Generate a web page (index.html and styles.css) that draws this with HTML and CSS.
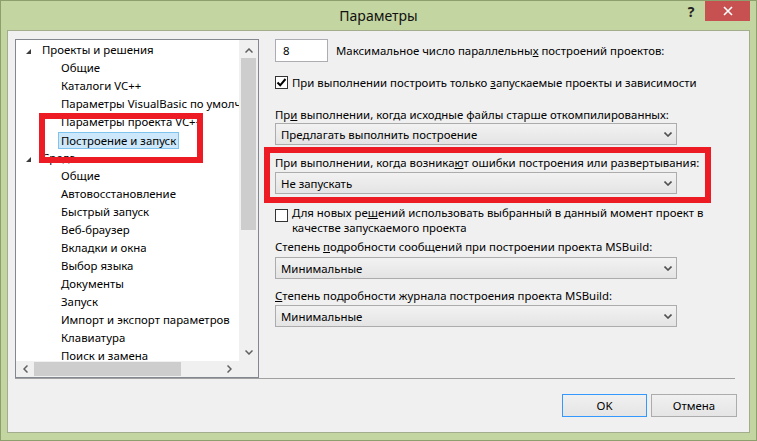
FILE: index.html
```html
<!DOCTYPE html>
<html lang="ru">
<head>
  <meta charset="UTF-8">
  <title>Параметры</title>
  <link rel="stylesheet" href="styles.css">
</head>
<body>
  <div class="window">
    <div class="titlebar">
      <div></div>
      <div class="title">Параметры</div>
      <div class="caption-buttons">
        <span class="help">?</span>
        <span class="close">
          <svg width="10" height="10" viewBox="0 0 10 10"><path d="M1 1 L9 9 M9 1 L1 9" stroke="#fff" stroke-width="1.6"/></svg>
        </span>
      </div>
    </div>

    <div class="client">
      <div class="main">
        <div class="tree">
          <div class="tree-view">
            <div class="node parent"><svg class="expander" width="5" height="5" viewBox="0 0 5 5"><polygon points="5,0 5,5 0,5" fill="#3c3c3c"/></svg>Проекты и решения</div>
            <div class="node">Общие</div>
            <div class="node">Каталоги VC++</div>
            <div class="node">Параметры VisualBasic по умолчанию</div>
            <div class="node">Параметры проекта VC++</div>
            <div class="node selected"><span>Построение и запуск</span></div>
            <div class="node parent"><svg class="expander" width="5" height="5" viewBox="0 0 5 5"><polygon points="5,0 5,5 0,5" fill="#3c3c3c"/></svg>Среда</div>
            <div class="node">Общие</div>
            <div class="node">Автовосстановление</div>
            <div class="node">Быстрый запуск</div>
            <div class="node">Веб-браузер</div>
            <div class="node">Вкладки и окна</div>
            <div class="node">Выбор языка</div>
            <div class="node">Документы</div>
            <div class="node">Запуск</div>
            <div class="node">Импорт и экспорт параметров</div>
            <div class="node">Клавиатура</div>
            <div class="node">Поиск и замена</div>
          </div>
          <div class="vscroll">
            <div class="arrow"><svg width="8" height="5" viewBox="0 0 8 5"><polyline points="0.5,4.5 4,1 7.5,4.5" fill="none" stroke="#606060" stroke-width="1.5"/></svg></div>
            <div class="thumb-v"></div>
            <div class="track"></div>
            <div class="arrow"><svg width="8" height="5" viewBox="0 0 8 5"><polyline points="0.5,0.5 4,4 7.5,0.5" fill="none" stroke="#606060" stroke-width="1.5"/></svg></div>
          </div>
          <div class="hscroll">
            <div class="arrow arrow-left"><svg width="5" height="8" viewBox="0 0 5 8"><polyline points="4.5,0.5 1,4 4.5,7.5" fill="none" stroke="#606060" stroke-width="1.5"/></svg></div>
            <div class="thumb-h"></div>
            <div class="track"></div>
            <div class="arrow arrow-right"><svg width="5" height="8" viewBox="0 0 5 8"><polyline points="0.5,0.5 4,4 0.5,7.5" fill="none" stroke="#606060" stroke-width="1.5"/></svg></div>
          </div>
          <div class="corner"></div>
        </div>

        <div class="options">
          <div class="num-row">
            <div class="num">8</div>
            <div class="num-label">Максимальное число параллельны<u>х</u> построений проектов:</div>
          </div>

          <div class="check check-first">
            <span class="box"><svg width="11" height="11" viewBox="0 0 11 11"><path d="M1.5 5.5 L4.2 8.3 L9.5 2" fill="none" stroke="#000" stroke-width="2"/></svg></span>
            <span>При выполнении построить только <u>з</u>апускаемые проекты и зависимости</span>
          </div>

          <div class="label label-1">Пр<u>и</u> выполнении, когда исходные файлы старше откомпилированных:</div>
          <div class="combo"><span>Предлагать выполнить построение</span><svg width="8" height="5" viewBox="0 0 8 5"><polyline points="0.5,0.5 4,4 7.5,0.5" fill="none" stroke="#505050" stroke-width="1.6"/></svg></div>

          <div class="label label-2">При выполнении, когда возника<u>ю</u>т ошибки построения или развертывания:</div>
          <div class="combo combo-2"><span>Не запускать</span><svg width="8" height="5" viewBox="0 0 8 5"><polyline points="0.5,0.5 4,4 7.5,0.5" fill="none" stroke="#505050" stroke-width="1.6"/></svg></div>

          <div class="check check-second">
            <span class="box"></span>
            <span>Для новых ре<u>ш</u>ений использовать выбранный в данный момент проект в<br>качестве запускаемого проекта</span>
          </div>

          <div class="label label-3">Степень <u>п</u>одробности сообщений при построении проекта MSBuild:</div>
          <div class="combo combo-3"><span>Минимальные</span><svg width="8" height="5" viewBox="0 0 8 5"><polyline points="0.5,0.5 4,4 7.5,0.5" fill="none" stroke="#505050" stroke-width="1.6"/></svg></div>

          <div class="label label-4"><u>С</u>тепень подробности журнала построения проекта MSBuild:</div>
          <div class="combo combo-4"><span>Минимальные</span><svg width="8" height="5" viewBox="0 0 8 5"><polyline points="0.5,0.5 4,4 7.5,0.5" fill="none" stroke="#505050" stroke-width="1.6"/></svg></div>
        </div>
      </div>

      <div class="separator"></div>

      <div class="buttons">
        <button class="btn default">OK</button>
        <button class="btn cancel">Отмена</button>
      </div>
    </div>

    <!-- annotation frames drawn over the dialog -->
    <div class="mark mark-tree"></div>
    <div class="mark mark-options"></div>
  </div>
</body>
</html>
```

FILE: styles.css
```css
body {
  margin: 0;
  font-family: "Segoe UI", "Noto Sans", sans-serif;
  font-size: 11.4px;
  color: #000;
}
.window {
  width: 757px;
  height: 441px;
  box-sizing: border-box;
  border: 1px solid #8d9f6c;
  background: #c3d5a0;
  position: relative;
}
.titlebar {
  height: 29px;
  display: grid;
  grid-template-columns: 1fr auto 1fr;
}
.title {
  font-size: 14px;
  line-height: 29px;
  color: #111;
}
.caption-buttons {
  display: flex;
  justify-content: flex-end;
  align-items: flex-start;
  margin-right: 6px;
}
.help {
  width: 20px;
  margin-right: 4px;
  text-align: center;
  font-weight: bold;
  font-size: 14px;
  line-height: 22px;
  color: #222;
}
.close {
  width: 45px;
  height: 20px;
  background: #c75050;
  display: flex;
  align-items: center;
  justify-content: center;
}
.client {
  margin: 0 6px;
  height: 403px;
  box-sizing: border-box;
  border: 1px solid #a3ad8d;
  background: #f0f0f0;
  padding: 8px 12px 15px 7px;
}
.main {
  display: flex;
  gap: 16px;
  height: 339px;
}

/* tree */
.tree {
  width: 244px;
  height: 339px;
  flex: none;
  box-sizing: border-box;
  border: 1px solid #828790;
  background: #fff;
  display: grid;
  grid-template-columns: 223px 19px;
  grid-template-rows: 321px 16px;
}
.tree-view {
  overflow: hidden;
  padding-top: 1px;
}
.node {
  height: 18px;
  line-height: 18px;
  white-space: nowrap;
  padding-left: 45px;
}
.node.parent {
  padding-left: 10px;
  display: flex;
  align-items: center;
}
.expander {
  margin-right: 11px;
  margin-top: 2px;
}
.node.selected {
  padding-left: 42px;
}
.node.selected span {
  display: inline-block;
  line-height: 15px;
  padding: 0 2px;
  border: 1px solid #7fc3ef;
  background: #cde8fa;
  vertical-align: top;
  margin-top: 1px;
}
.vscroll {
  background: #f0f0f0;
  display: flex;
  flex-direction: column;
}
.vscroll .arrow {
  height: 18px;
  display: flex;
  align-items: center;
  justify-content: center;
}
.vscroll .arrow:first-child { padding-top: 2px; height: 16px; }
.thumb-v {
  height: 172px;
  margin: 0 2px;
  background: #cdcdcd;
}
.track { flex: 1; }
.hscroll {
  background: #f0f0f0;
  display: flex;
  align-items: center;
}
.hscroll .arrow {
  height: 16px;
  display: flex;
  align-items: center;
  justify-content: center;
}
.arrow-left { width: 18px; }
.arrow-right { width: 19px; }
.thumb-h {
  width: 147px;
  height: 14px;
  background: #cdcdcd;
}
.corner { background: #f0f0f0; }

/* options */
.options {
  width: 462px;
}
.num-row {
  display: flex;
  align-items: center;
  height: 23px;
}
.num {
  width: 53px;
  height: 23px;
  box-sizing: border-box;
  border: 1px solid #abadb3;
  background: #fff;
  padding-left: 7px;
  line-height: 21px;
}
.num-label { margin-left: 8px; white-space: nowrap; }
.check {
  display: flex;
  align-items: flex-start;
  line-height: 15px;
  white-space: nowrap;
}
.box {
  width: 13px;
  height: 13px;
  flex: none;
  box-sizing: border-box;
  border: 1px solid #333;
  background: #fff;
  margin-right: 4px;
  display: flex;
  align-items: center;
  justify-content: center;
}
.check-first { margin-top: 13px; }
.check-first .box { margin-top: 1px; }
.check-second { margin-top: 11px; }
.check-second .box { margin-top: 4px; }
.label { line-height: 16px; white-space: nowrap; }
.label-1 { margin-top: 17px; }
.label-2 { margin-top: 10px; }
.label-3 { margin-top: 4px; }
.label-4 { margin-top: 9px; }
.combo {
  width: 402px;
  height: 22px;
  box-sizing: border-box;
  border: 1px solid #acacac;
  background: linear-gradient(#f2f2f2, #e4e4e4);
  display: flex;
  align-items: center;
  justify-content: space-between;
  padding: 0 4px 0 5px;
}
.combo-2 { margin-top: 1px; }
.combo-3 { margin-top: 2px; }
.combo-4 { margin-top: 1px; }

/* footer */
.separator {
  height: 1px;
  background: #a0a0a0;
  margin-right: 2px;
}
.buttons {
  display: flex;
  justify-content: flex-end;
  gap: 4px;
  margin-top: 15px;
}
.btn {
  height: 23px;
  font-family: inherit;
  font-size: 11.4px;
  color: #000;
  border: 1px solid #acacac;
  background: linear-gradient(#f0f0f0, #e5e5e5);
  padding: 0;
}
.btn.default {
  width: 85px;
  border-color: #3399ff;
}
.btn.cancel { width: 86px; }

/* red annotation frames */
.mark {
  position: absolute;
  box-sizing: border-box;
  border: 6px solid #ed1c24;
}
.mark-tree {
  left: 38px;
  top: 112px;
  width: 164px;
  height: 50px;
}
.mark-options {
  left: 263px;
  top: 146px;
  width: 447px;
  height: 56px;
}
```
